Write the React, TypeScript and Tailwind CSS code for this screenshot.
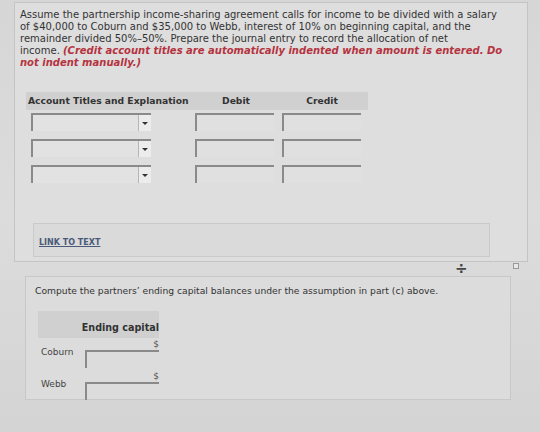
import React from 'react';

const FONT = { fontFamily: '"DejaVu Sans", Verdana, sans-serif' };

const Select: React.FC = () => (
  <div className="flex h-[18px] w-[120px] border-t-2 border-l-2 border-[#8a8a8a] bg-[#e2e2e2]">
    <div className="flex-1" />
    <div className="flex w-[13px] items-center justify-center border-l border-[#b5b5b5] bg-[#ececec]">
      <span className="block h-0 w-0 border-x-[3px] border-t-[3px] border-x-transparent border-t-[#333]" />
    </div>
  </div>
);

const Amount: React.FC = () => (
  <div className="h-[18px] w-[79px] border-t-2 border-l-2 border-[#8a8a8a] bg-[#e0e0e0]" />
);

const JournalRow: React.FC = () => (
  <div className="flex items-start">
    <div className="ml-[5px] w-[165px]">
      <Select />
    </div>
    <div className="-ml-[1px] flex gap-[8px]">
      <Amount />
      <Amount />
    </div>
  </div>
);

const CapitalRow: React.FC<{ name: string }> = ({ name }) => (
  <div className="flex items-end">
    <span className="mb-[10px] w-[47px] pl-[3px] text-[9px] leading-[11px] text-[#444]">{name}</span>
    <div className="flex flex-col items-end">
      <span className="mb-[1px] text-[9px] leading-[10px] text-[#555]">$</span>
      <div className="h-[18px] w-[74px] border-t-2 border-l-2 border-[#8a8a8a]" />
    </div>
  </div>
);

export default function App() {
  return (
    <div
      className="h-[432px] w-[540px] overflow-hidden bg-gradient-to-b from-[#d6d6d6] via-[#dcdcdc] to-[#d4d4d4] pt-[2px]"
      style={FONT}
    >
      {/* question panel */}
      <div className="ml-[14px] h-[260px] w-[514px] border border-[#c4c4c4] bg-[#dedede] px-[5px] pt-[6px]">
        <p className="text-[10px] leading-[12px] text-[#333]">
          Assume the partnership income-sharing agreement calls for income to be divided with a salary
          <br />
          of $40,000 to Coburn and $35,000 to Webb, interest of 10% on beginning capital, and the
          <br />
          remainder divided 50%–50%. Prepare the journal entry to record the allocation of net
          <br />
          income.{' '}
          <span className="font-bold italic text-[#b5333f]">
            (Credit account titles are automatically indented when amount is entered. Do
            <br />
            not indent manually.)
          </span>
        </p>

        <div className="ml-[6px] mt-[23px] w-[342px]">
          <div className="flex h-[18px] items-center bg-[#d0d0d0] text-[9.2px] font-bold text-[#333]">
            <span className="w-[170px] pl-[2px]">Account Titles and Explanation</span>
            <span className="w-[80px] text-center">Debit</span>
            <span className="w-[92px] text-center">Credit</span>
          </div>
          <div className="mt-[3px] flex flex-col gap-[8px]">
            <JournalRow />
            <JournalRow />
            <JournalRow />
          </div>
        </div>

        <div className="ml-[13px] mt-[40px] flex h-[34px] w-[457px] items-center border border-[#cacaca] bg-[#dadada] px-[5px] pt-[5px]">
          <span className="text-[8px] font-bold text-[#4a5a78] underline">LINK TO TEXT</span>
        </div>
      </div>

      {/* divider controls */}
      <div className="relative h-[14px]">
        <span className="absolute left-[455px] top-[0px] text-[15px] font-bold leading-[15px] text-[#444]">÷</span>
        <span className="absolute left-[513px] top-[1px] h-[6px] w-[6px] border border-[#999] bg-[#e8e8e8]" />
      </div>

      {/* part (d) panel */}
      <div className="ml-[25px] h-[124px] w-[486px] border border-[#c8c8c8] bg-[#dcdcdc] px-[9px] pt-[7px]">
        <p className="text-[9.2px] text-[#333]">
          Compute the partners’ ending capital balances under the assumption in part (c) above.
        </p>
        <div className="ml-[3px] mt-[13px] w-[121px]">
          <div className="flex h-[27px] items-end justify-end bg-[#d0d0d0] pb-[2px] text-[9.6px] font-bold text-[#333]">
            Ending capital
          </div>
          <div className="mt-[1px] flex flex-col gap-[3px]">
            <CapitalRow name="Coburn" />
            <CapitalRow name="Webb" />
          </div>
        </div>
      </div>
    </div>
  );
}
